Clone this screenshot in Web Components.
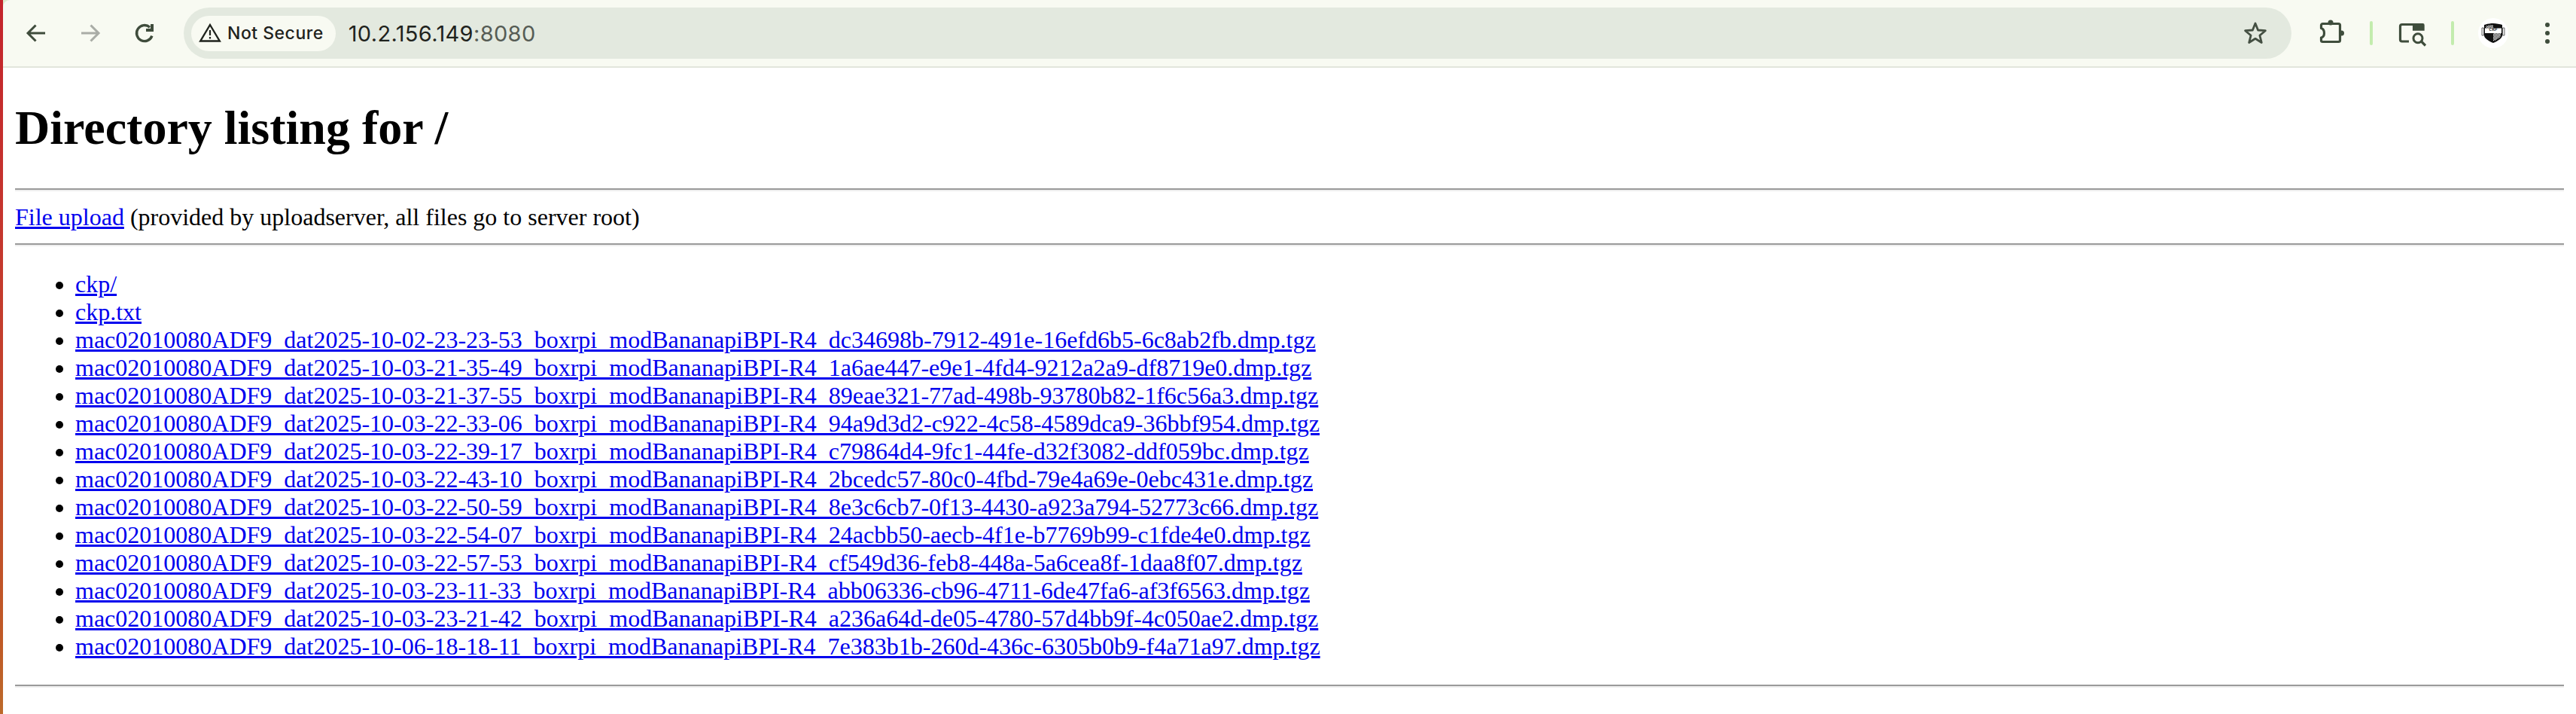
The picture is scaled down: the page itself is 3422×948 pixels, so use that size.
<!DOCTYPE html>
<html>
<head>
<meta charset="utf-8">
<title>Directory listing for /</title>
<style>
  html, body { margin: 0; height: 100%; background: #fff; }
  body { font-family: "Liberation Serif", serif; overflow: hidden; }
</style>
</head>
<body>
<browser-window>
  <browser-toolbar slot="toolbar" host-name="10.2.156.149" port=":8080"></browser-toolbar>
  <listing-page heading="Directory listing for /">
    <upload-note href="#" label="File upload">(provided by uploadserver, all files go to server root)</upload-note>
    <file-link>ckp/</file-link>
    <file-link>ckp.txt</file-link>
    <file-link>mac02010080ADF9_dat2025-10-02-23-23-53_boxrpi_modBananapiBPI-R4_dc34698b-7912-491e-16efd6b5-6c8ab2fb.dmp.tgz</file-link>
    <file-link>mac02010080ADF9_dat2025-10-03-21-35-49_boxrpi_modBananapiBPI-R4_1a6ae447-e9e1-4fd4-9212a2a9-df8719e0.dmp.tgz</file-link>
    <file-link>mac02010080ADF9_dat2025-10-03-21-37-55_boxrpi_modBananapiBPI-R4_89eae321-77ad-498b-93780b82-1f6c56a3.dmp.tgz</file-link>
    <file-link>mac02010080ADF9_dat2025-10-03-22-33-06_boxrpi_modBananapiBPI-R4_94a9d3d2-c922-4c58-4589dca9-36bbf954.dmp.tgz</file-link>
    <file-link>mac02010080ADF9_dat2025-10-03-22-39-17_boxrpi_modBananapiBPI-R4_c79864d4-9fc1-44fe-d32f3082-ddf059bc.dmp.tgz</file-link>
    <file-link>mac02010080ADF9_dat2025-10-03-22-43-10_boxrpi_modBananapiBPI-R4_2bcedc57-80c0-4fbd-79e4a69e-0ebc431e.dmp.tgz</file-link>
    <file-link>mac02010080ADF9_dat2025-10-03-22-50-59_boxrpi_modBananapiBPI-R4_8e3c6cb7-0f13-4430-a923a794-52773c66.dmp.tgz</file-link>
    <file-link>mac02010080ADF9_dat2025-10-03-22-54-07_boxrpi_modBananapiBPI-R4_24acbb50-aecb-4f1e-b7769b99-c1fde4e0.dmp.tgz</file-link>
    <file-link>mac02010080ADF9_dat2025-10-03-22-57-53_boxrpi_modBananapiBPI-R4_cf549d36-feb8-448a-5a6cea8f-1daa8f07.dmp.tgz</file-link>
    <file-link>mac02010080ADF9_dat2025-10-03-23-11-33_boxrpi_modBananapiBPI-R4_abb06336-cb96-4711-6de47fa6-af3f6563.dmp.tgz</file-link>
    <file-link>mac02010080ADF9_dat2025-10-03-23-21-42_boxrpi_modBananapiBPI-R4_a236a64d-de05-4780-57d4bb9f-4c050ae2.dmp.tgz</file-link>
    <file-link>mac02010080ADF9_dat2025-10-06-18-18-11_boxrpi_modBananapiBPI-R4_7e383b1b-260d-436c-6305b0b9-f4a71a97.dmp.tgz</file-link>
  </listing-page>
</browser-window>

<script>
class BrowserWindow extends HTMLElement {
  constructor() {
    super();
    this.attachShadow({ mode: 'open' });
  }

  connectedCallback() {
    this.shadowRoot.innerHTML = `
      <style>
        :host {
          display: flex;
          height: 100vh;
          background: #fff;
        }
        .edge {
          flex: 0 0 4px;
          background: linear-gradient(180deg, #c4242c 0%, #c5352e 30%, #c2452b 60%, #bf5a26 90%, #bc6a2b 100%);
        }
        .main {
          flex: 1;
          min-width: 0;
          display: flex;
          flex-direction: column;
        }
      </style>
      <div class="edge"></div>
      <div class="main">
        <slot name="toolbar"></slot>
        <slot></slot>
      </div>
    `;
  }
}

class BrowserToolbar extends HTMLElement {
  constructor() {
    super();
    this.attachShadow({ mode: 'open' });
  }

  connectedCallback() {
    const host = this.getAttribute('host-name') || '';
    const port = this.getAttribute('port') || '';

    this.shadowRoot.innerHTML = `
      <style>
        :host {
          display: block;
          flex: none;
          background: #dbecce;
          font-family: Inter, "Liberation Sans", sans-serif;
          color: #1f231d;
        }
        .bar {
          display: flex;
          align-items: center;
          height: 88px;
          background: #f8faf2;
          border-bottom: 2px solid #e2e5dc;
          border-top-left-radius: 9px;
        }
        svg { display: block; flex: none; }
        .nav { display: flex; align-items: center; gap: 40px; margin-left: 28px; }
        .omni {
          flex: 1;
          display: flex;
          align-items: center;
          height: 68px;
          margin-left: 36px;
          padding: 0 10px;
          border-radius: 34px;
          background: #e3e9df;
        }
        .chip {
          display: flex;
          align-items: center;
          gap: 8px;
          height: 47px;
          padding: 0 16px 0 10px;
          border-radius: 24px;
          background: #f8faf2;
          font-size: 23px;
          font-weight: 500;
          letter-spacing: .5px;
          white-space: nowrap;
        }
        .url { margin-left: 17px; font-size: 29px; letter-spacing: .35px; white-space: nowrap; }
        .port { color: #565c55; }
        .star { margin-left: auto; margin-right: 21px; }
        .actions { display: flex; align-items: center; margin-left: 36px; margin-right: 32px; }
        .divider { width: 4px; height: 32px; border-radius: 2px; background: #c3ecae; }
        .avatar {
          position: relative;
          width: 40px;
          height: 40px;
          border-radius: 50%;
          background: #fff;
          display: flex;
          align-items: center;
          justify-content: center;
        }
        .avatar span {
          position: absolute;
          top: 12px;
          font: 700 6px "Liberation Mono", monospace;
          color: #333;
        }
      </style>
      <div class="bar">
        <div class="nav">
          <svg width="32" height="32" viewBox="0 0 32 32" fill="none" stroke="#3f4c3c" stroke-width="3">
            <path d="M28 16H6.500M15.500 5.500 5 16l10.500 10.500"/>
          </svg>
          <svg width="32" height="32" viewBox="0 0 32 32" fill="none" stroke="#a9aca6" stroke-width="3">
            <path d="M4 16h21.500M16.500 5.500 27 16 16.500 26.500"/>
          </svg>
          <svg width="32" height="32" viewBox="0 0 32 32" fill="none" stroke="#3f4c3c" stroke-width="3.400">
            <path d="M25.900 19.600A10.500 10.500 0 1 1 23 8.200"/>
            <path d="M24 4h4v10H18v-4h6Z" fill="#3f4c3c" stroke="none"/>
          </svg>
        </div>
        <div class="omni">
          <div class="chip">
            <svg width="30" height="32" viewBox="0 0 30 32">
              <path d="M15 5 27.800 26.500H2.200Z" fill="none" stroke="#1f231d" stroke-width="2.400" stroke-linejoin="miter"/>
              <path d="M15 12v7M15 21v2.600" stroke="#1f231d" stroke-width="2.200"/>
            </svg>
            <span>Not Secure</span>
          </div>
          <span class="url">${host}<span class="port">${port}</span></span>
          <svg class="star" width="34" height="34" viewBox="0 0 34 34" fill="none" stroke="#444f42" stroke-width="2.800" stroke-linejoin="round">
            <path d="M17 4 20.600 13 30.400 13.700 22.900 20 25.300 29.500 17 24.300 8.700 29.500 11.100 20 3.600 13.700 13.400 13Z"/>
          </svg>
        </div>
        <div class="actions">
          <svg width="36" height="36" viewBox="0 0 36 36">
            <circle cx="16" cy="4" r="3.500" fill="#3f4d3c"/>
            <circle cx="30.500" cy="18" r="3.500" fill="#3f4d3c"/>
            <path d="M5.500 5.500H26.500a2 2 0 0 1 2 2V27.500a2 2 0 0 1-2 2H5.500a2 2 0 0 1-2-2V24C7 23 7.500 20 7.500 18S7 12.500 3.500 11.500V7.500a2 2 0 0 1 2-2Z" fill="none" stroke="#3f4d3c" stroke-width="3.200" stroke-linejoin="round"/>
          </svg>
          <div class="divider" style="margin-left:32px"></div>
          <svg style="margin-left:34px" width="38" height="38" viewBox="0 0 38 38" fill="none" stroke="#3f4d3c">
            <path d="M19 7.500H5a2.500 2.500 0 0 0-2.500 2.500V27.500A2.500 2.500 0 0 0 5 30H14" stroke-width="3.200"/>
            <path d="M19 6h13.500a2.200 2.200 0 0 1 2.200 2.200v7.500H19Z" fill="#3f4d3c" stroke="none"/>
            <circle cx="26" cy="25.700" r="6" stroke-width="3"/>
            <path d="M30.500 30 36 35.500" stroke-width="3.200"/>
          </svg>
          <div class="divider" style="margin-left:32px"></div>
          <div class="avatar" style="margin-left:32px">
            <svg width="32" height="32" viewBox="0 0 32 32">
              <defs>
                <pattern id="hatch" width="2" height="2" patternUnits="userSpaceOnUse">
                  <rect width="2" height="2" fill="#fff"/>
                  <rect width="1" height="1" fill="#222"/>
                  <rect x="1" y="1" width="1" height="1" fill="#222"/>
                </pattern>
              </defs>
              <path d="M1 9h2.500v10H1ZM28.500 9H31v10h-2.500Z" fill="#eee" stroke="#444" stroke-width=".8"/>
              <path d="M16 3C20 3 25 4 28 5V19C28 23 21 27 16 29 11 27 4 23 4 19V5C7 4 12 3 16 3Z" fill="#111"/>
              <path d="M6.500 6.500C9 5.800 13 5.300 16 5.300V9.500H6.500Z" fill="url(#hatch)"/>
              <path d="M5 9.500H27V16H5Z" fill="#fff"/>
              <path d="M16 16H26V19C26 22 20 25 16 26.800Z" fill="url(#hatch)"/>
            </svg>
            <span>CKP</span>
          </div>
          <svg style="margin-left:46px" width="12" height="32" viewBox="0 0 12 32" fill="#3f4d3c">
            <circle cx="6" cy="5" r="3"/><circle cx="6" cy="16" r="3"/><circle cx="6" cy="27" r="3"/>
          </svg>
        </div>
      </div>
    `;
  }
}

// python http.server look: everything is the UA style at 2x
class ListingPage extends HTMLElement {
  constructor() {
    super();
    this.attachShadow({ mode: 'open' });
  }

  connectedCallback() {
    const heading = this.getAttribute('heading') || '';

    this.shadowRoot.innerHTML = `
      <style>
        :host {
          display: block;
          flex: 1;
          padding: 0 16px;
          font-family: "Liberation Serif", "Times New Roman", serif;
          font-size: 32px;
          color: #000;
          overflow: hidden;
        }
        h1 { font-size: 64px; font-weight: 700; margin: 43px 0; }
        hr {
          margin: 16px 0;
          height: 0;
          border: 0;
          border-top: 2px solid #9a9a9a;
          border-bottom: 2px solid #eeeeee;
        }
        h1 + hr { margin-top: 0; }
        ul { margin: 32px 0; padding: 0 0 0 80px; }
      </style>
      <h1>${heading}</h1>
      <hr>
      <slot name="note"></slot>
      <hr>
      <ul><slot></slot></ul>
      <hr>
    `;
  }
}

class UploadNote extends HTMLElement {
  constructor() {
    super();
    this.attachShadow({ mode: 'open' });
  }

  connectedCallback() {
    this.slot = 'note';
    const href = this.getAttribute('href') || '#';
    const label = this.getAttribute('label') || '';

    this.shadowRoot.innerHTML = `
      <style>
        :host { display: block; }
        a { color: #0000ee; text-decoration: underline; }
      </style>
      <a href="${href}">${label}</a> <slot></slot>
    `;
  }
}

class FileLink extends HTMLElement {
  constructor() {
    super();
    this.attachShadow({ mode: 'open' });
  }

  connectedCallback() {
    this.shadowRoot.innerHTML = `
      <style>
        :host { display: list-item; list-style: disc; }
        a { color: #0000ee; text-decoration: underline; }
      </style>
      <a href="#"><slot></slot></a>
    `;
  }
}

customElements.define('browser-window', BrowserWindow);
customElements.define('browser-toolbar', BrowserToolbar);
customElements.define('listing-page', ListingPage);
customElements.define('upload-note', UploadNote);
customElements.define('file-link', FileLink);
</script>
</body>
</html>
